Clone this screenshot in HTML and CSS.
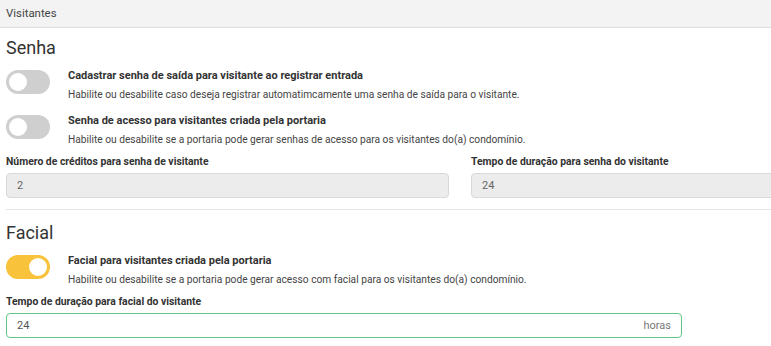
FILE: index.html
```html
<!DOCTYPE html>
<html lang="pt-BR">
<head>
  <meta charset="UTF-8">
  <title>Visitantes</title>
  <link rel="stylesheet" href="styles.css">
</head>
<body>
  <div class="header">Visitantes</div>
  <div class="content">
    <h2 class="section-title">Senha</h2>

    <div class="toggle-row">
      <span class="toggle"></span>
      <div class="toggle-text">
        <div class="toggle-label">Cadastrar senha de saída para visitante ao registrar entrada</div>
        <div class="toggle-desc">Habilite ou desabilite caso deseja registrar automatimcamente uma senha de saída para o visitante.</div>
      </div>
    </div>

    <div class="toggle-row">
      <span class="toggle"></span>
      <div class="toggle-text">
        <div class="toggle-label">Senha de acesso para visitantes criada pela portaria</div>
        <div class="toggle-desc">Habilite ou desabilite se a portaria pode gerar senhas de acesso para os visitantes do(a) condomínio.</div>
      </div>
    </div>

    <div class="fields">
      <div class="field">
        <label class="field-label">Número de créditos para senha de visitante</label>
        <div class="input disabled">2</div>
      </div>
      <div class="field">
        <label class="field-label">Tempo de duração para senha do visitante</label>
        <div class="input disabled">24</div>
      </div>
    </div>

    <hr class="divider">

    <h2 class="section-title">Facial</h2>

    <div class="toggle-row">
      <span class="toggle on"></span>
      <div class="toggle-text">
        <div class="toggle-label">Facial para visitantes criada pela portaria</div>
        <div class="toggle-desc">Habilite ou desabilite se a portaria pode gerar acesso com facial para os visitantes do(a) condomínio.</div>
      </div>
    </div>

    <div class="field wide">
      <label class="field-label">Tempo de duração para facial do visitante</label>
      <div class="input valid">
        <span>24</span>
        <span class="suffix">horas</span>
      </div>
    </div>
  </div>
</body>
</html>
```

FILE: styles.css
```css
* {
  margin: 0;
  padding: 0;
  box-sizing: border-box;
}

body {
  font-family: Roboto, 'Liberation Sans', sans-serif;
  color: #333;
  background: #fff;
  width: 771px;
  height: 346px;
  overflow: hidden;
}

.header {
  height: 28px;
  line-height: 26px;
  padding-left: 6px;
  font-size: 11.4px;
  color: #444;
  background: #f3f3f3;
  border-bottom: 1px solid #dedede;
}

.content {
  width: 920px;
  padding: 0 6px;
}

.section-title {
  font-size: 18px;
  font-weight: 400;
  line-height: 24px;
  color: #333;
  margin-top: 8px;
  margin-bottom: 7px;
}

.toggle-row {
  display: flex;
  align-items: flex-start;
  gap: 18px;
}

.toggle-row + .toggle-row {
  margin-top: 8px;
}

.toggle {
  position: relative;
  width: 44px;
  height: 24px;
  margin-top: 3px;
  border-radius: 12px;
  background: #cfcfcf;
  flex-shrink: 0;
}

.toggle::after {
  content: '';
  position: absolute;
  top: 3px;
  left: 3px;
  width: 18px;
  height: 18px;
  border-radius: 50%;
  background: #fff;
}

.toggle.on {
  background: #f8c23a;
}

.toggle.on::after {
  left: 23px;
}

.toggle-label {
  font-size: 11px;
  font-weight: 700;
  line-height: 18px;
  color: #333;
}

.toggle-desc {
  font-size: 10.2px;
  line-height: 18px;
  color: #444;
  margin-top: 1px;
}

.fields {
  display: flex;
  gap: 22px;
  margin-top: 4px;
}

.field {
  flex: 1;
}

.field.wide {
  width: 676px;
  margin-top: 4px;
}

.field-label {
  display: block;
  font-size: 10.4px;
  font-weight: 700;
  line-height: 18px;
  color: #333;
}

.input {
  display: flex;
  justify-content: space-between;
  align-items: center;
  height: 25px;
  margin-top: 2px;
  padding: 0 10px;
  font-size: 11px;
  color: #555;
  border: 1px solid #d9d9d9;
  border-radius: 4px;
  background: #fff;
}

.input.disabled {
  background: #ececec;
  color: #666;
}

.input.valid {
  border-color: #62c783;
}

.suffix {
  color: #777;
}

.divider {
  border: 0;
  border-top: 1px solid #e6e6e6;
  margin-top: 11px;
  margin-bottom: 11px;
}
```
